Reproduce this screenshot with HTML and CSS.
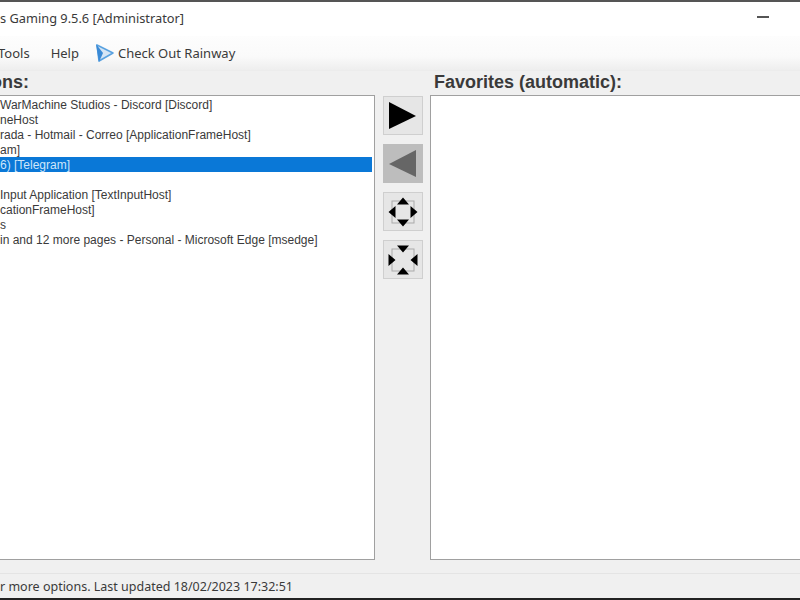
FILE: index.html
```html
<!DOCTYPE html>
<html lang="en">
<head>
<meta charset="utf-8">
<title>Borderless Gaming</title>
<link rel="stylesheet" href="styles.css">
</head>
<body>
<div class="window">
  <header class="titlebar">
    <span class="title">s Gaming 9.5.6 [Administrator]</span>
    <span class="minimize"></span>
  </header>
  <nav class="menubar">
    <span class="menu-item tools">Tools</span>
    <span class="menu-item help">Help</span>
    <span class="menu-item rainway">
      <svg class="rainway-icon" width="20" height="20" viewBox="0 0 20 20"><path d="M2 2 L18 10 L4 18 Z" fill="#d5e5f5" stroke="#5aa2e0" stroke-width="1.6" stroke-linejoin="round"/><path d="M1 1 L4 19 L8 10 Z" fill="#3a8ad6"/></svg>
      Check Out Rainway
    </span>
  </nav>
  <main class="content">
    <section class="col-left">
      <h2 class="heading heading-left">ons:</h2>
      <ul class="listbox">
        <li class="row">WarMachine Studios - Discord [Discord]</li>
        <li class="row">neHost</li>
        <li class="row">rada - Hotmail - Correo [ApplicationFrameHost]</li>
        <li class="row">am]</li>
        <li class="row selected">6) [Telegram]</li>
        <li class="row"></li>
        <li class="row">Input Application [TextInputHost]</li>
        <li class="row">cationFrameHost]</li>
        <li class="row">s</li>
        <li class="row">in and 12 more pages - Personal - Microsoft Edge [msedge]</li>
      </ul>
    </section>
    <div class="buttons">
      <button class="btn"><svg width="30" height="30" viewBox="0 0 30 30"><path d="M1 1 L28 15 L1 28 Z" fill="#000"/></svg></button>
      <button class="btn btn-disabled"><svg width="30" height="30" viewBox="0 0 30 30"><path d="M28 1 L1 15 L28 28 Z" fill="#666"/></svg></button>
      <button class="btn"><svg width="30" height="30" viewBox="0 0 30 30"><rect x="4" y="4" width="22" height="22" fill="none" stroke="#aaa"/><path d="M15 0.5 L21 7.5 L9 7.5 Z M15 29.5 L21 22.5 L9 22.5 Z M0.5 15 L7.5 9 L7.5 21 Z M29.5 15 L22.5 9 L22.5 21 Z" fill="#000"/></svg></button>
      <button class="btn"><svg width="30" height="30" viewBox="0 0 30 30"><rect x="4" y="4" width="22" height="22" fill="none" stroke="#aaa"/><path d="M15 7.5 L21 0.5 L9 0.5 Z M15 22.5 L21 29.5 L9 29.5 Z M7.5 15 L0.5 9 L0.5 21 Z M22.5 15 L29.5 9 L29.5 21 Z" fill="#000"/></svg></button>
    </div>
    <section class="col-right">
      <h2 class="heading heading-right">Favorites (automatic):</h2>
      <div class="listbox"></div>
    </section>
  </main>
  <footer class="statusbar">r more options. Last updated 18/02/2023 17:32:51</footer>
</div>
</body>
</html>
```
FILE: styles.css
```css
* { box-sizing: border-box; }
html, body { margin: 0; padding: 0; }
body { width: 800px; height: 600px; overflow: hidden; background: #f0f0f0; }
.window {
  width: 800px; height: 600px; display: flex; flex-direction: column;
  font-family: "Noto Sans", "Liberation Sans", sans-serif; color: #3a3a3a;
  border-top: 2px solid #555; border-bottom: 2px solid #222;
}
.titlebar {
  height: 34px; flex: none; background: #fff; display: flex; align-items: center;
  justify-content: space-between; padding-right: 31px;
}
.title { font-size: 12.8px; margin-bottom: 2px; }
.minimize { width: 12px; height: 2px; background: #555; margin-bottom: 5px; }
.menubar {
  height: 34px; flex: none; display: flex; align-items: center;
  background: linear-gradient(#fdfdfd, #fafafa 60%, #eeeeee);
  font-size: 13px;
}
.menu-item { display: flex; align-items: center; }
.tools { margin-left: -2px; }
.help { margin-left: 21px; }
.rainway { margin-left: 16px; gap: 3px; }
.content { flex: 1; display: flex; min-height: 0; border-top: 1px solid #ececec; }
.col-left { width: 375px; flex: none; display: flex; flex-direction: column; }
.col-right { flex: 1; margin-right: -4px; display: flex; flex-direction: column; }
.heading {
  margin: 0; height: 24px; flex: none; font-family: "Liberation Sans", sans-serif;
  font-size: 18px; font-weight: 700; line-height: 23px; color: #3a3a3a; white-space: nowrap;
}
.heading-left { margin-left: -9px; }
.heading-right { margin-left: 4px; }
.listbox {
  flex: 1; margin: 0; padding: 1px 0 0; list-style: none; background: #fff;
  border: 1px solid #a0a0a0; border-left: 0;
}
.col-right .listbox { border-left: 1px solid #a0a0a0; }
.row {
  height: 15px; font-family: "Liberation Sans", sans-serif; font-size: 12px;
  line-height: 17px; white-space: nowrap; color: #3a3a3a; margin-right: 1px;
}
.selected { background: #0a78d7; color: #cfe6fa; margin-right: 2px; }
.buttons { width: 47px; margin-left: 8px; flex: none; padding-top: 25px; display: flex; flex-direction: column; gap: 9px; }
.btn {
  width: 40px; height: 39px; padding: 0; background: #e6e6e6; border: 1px solid #cfcfcf;
  display: flex; align-items: center; justify-content: center;
}
.btn-disabled { background: #bdbdbd; border-color: #bdbdbd; }
.statusbar {
  height: 25px; flex: none; margin-top: 13px; border-top: 1px solid #e4e4e4; background: #f0f0f0;
  font-size: 12.5px; line-height: 26px; white-space: nowrap; color: #3a3a3a;
}
```
